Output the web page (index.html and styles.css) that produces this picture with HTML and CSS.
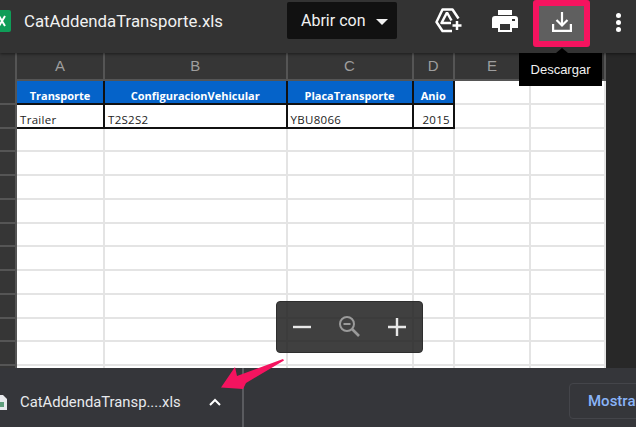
FILE: index.html
```html
<!DOCTYPE html>
<html lang="en">
<head>
    <meta charset="UTF-8">
    <title>CatAddendaTransporte.xls</title>
    <link rel="stylesheet" href="styles.css">
</head>
<body>
    <div class="viewer">
        <header class="toolbar">
            <svg class="file-badge" width="11" height="22" viewBox="0 0 11 22">
                <path d="M0 0h9a2 2 0 0 1 2 2v18a2 2 0 0 1-2 2H0z" fill="#0f9d58"/>
                <path d="M-1 6l6 10M5 6L-1 16" stroke="#fff" stroke-width="2" fill="none"/>
            </svg>
            <div class="file-name">CatAddendaTransporte.xls</div>
            <button class="open-with">Abrir con <span class="caret"></span></button>
            <div class="tools">
                <svg class="tool" width="28" height="26" viewBox="0 0 28 26" fill="none" stroke="#fff" stroke-width="2.500" stroke-linejoin="round">
                    <path d="M23.500 10.500L17.500 1.500H7.500L1.500 14l6 9H17"/>
                    <path d="M12 4.500L6.500 15H16M12 4.500l4.500 8"/>
                    <path d="M22 13v9M17.500 17.500h9"/>
                </svg>
                <svg class="tool" width="26" height="24" viewBox="0 0 26 24" fill="#fff">
                    <path d="M6 1h14v5H6zM3 7h20a3 3 0 0 1 3 3v9h-6v4H6v-4H0v-9a3 3 0 0 1 3-3z"/>
                    <path d="M8 15h10v6H8z" fill="#333"/>
                    <path d="M20 10h3v2h-3z" fill="#333"/>
                </svg>
                <div class="download-box">
                    <svg width="22" height="22" viewBox="0 0 22 22" fill="none" stroke="#fff" stroke-width="2.200">
                        <path d="M11 1v13M5.500 9l5.500 5.500L16.500 9"/>
                        <path d="M2.100 13v6.900h17.800V13"/>
                    </svg>
                </div>
                <div class="more"><span></span><span></span><span></span></div>
            </div>
        </header>

        <main class="sheet-area">
            <div class="row-gutter" id="gutter"></div>
            <div class="sheet">
                <div class="col-heads">
                    <div class="col-head col-a">A</div>
                    <div class="col-head col-b">B</div>
                    <div class="col-head col-c">C</div>
                    <div class="col-head col-d">D</div>
                    <div class="col-head col-e">E</div>
                    <div class="col-head col-f"></div>
                </div>
                <div class="row head-row">
                    <div class="cell col-a">Transporte</div>
                    <div class="cell col-b">ConfiguracionVehicular</div>
                    <div class="cell col-c">PlacaTransporte</div>
                    <div class="cell col-d">Anio</div>
                    <div class="cell col-e"></div>
                    <div class="cell col-f"></div>
                </div>
                <div class="row data-row">
                    <div class="cell col-a">Trailer</div>
                    <div class="cell col-b">T2S2S2</div>
                    <div class="cell col-c">YBU8066</div>
                    <div class="cell col-d num">2015</div>
                    <div class="cell col-e"></div>
                    <div class="cell col-f"></div>
                </div>
                <div id="emptyRows"></div>
            </div>
        </main>

        <footer class="download-bar">
            <svg class="bar-file" width="7" height="15" viewBox="0 0 7 15">
                <path d="M0 0h3l4 4v11H0z" fill="#e8eaed"/>
                <path d="M0 7h4v5H0z" fill="#5f9e7c"/>
            </svg>
            <div class="bar-name">CatAddendaTransp....xls</div>
            <svg class="bar-chevron" width="12" height="8" viewBox="0 0 12 8" fill="none" stroke="#fff" stroke-width="2"><path d="M1 7l5-5 5 5"/></svg>
            <div class="bar-divider"></div>
            <div class="show-all">Mostrar</div>
        </footer>

        <div class="tooltip">Descargar</div>

        <div class="zoom-box">
            <svg width="18" height="18" viewBox="0 0 18 18" stroke="#e8e8e8" stroke-width="2.400"><path d="M0 9h18"/></svg>
            <svg width="22" height="22" viewBox="2 2 22 22" fill="none" stroke="#9a9a9a" stroke-width="2">
                <circle cx="10" cy="10" r="7"/>
                <path d="M15 15l7 7" stroke-width="2.600"/>
                <path d="M6.500 10h7"/>
            </svg>
            <svg width="18" height="18" viewBox="0 0 18 18" stroke="#e8e8e8" stroke-width="2.400"><path d="M0 9h18M9 0v18"/></svg>
        </div>

        <svg class="arrow" width="68" height="34" viewBox="218 356 68 34">
            <path d="M283 359l1 1.500L246 383l-3 6-22-1.500L235 367l2 9z" fill="#f5135f"/>
        </svg>
    </div>

    <script>
        // row numbers on the left and the empty grid rows
        const gutter = document.getElementById('gutter');
        for (let i = 0; i < 14; i++) {
            const item = document.createElement('div');
            item.className = 'gutter-item';
            gutter.appendChild(item);
        }

        const emptyRows = document.getElementById('emptyRows');
        for (let i = 0; i < 11; i++) {
            const row = document.createElement('div');
            row.className = 'row';
            ['col-a', 'col-b', 'col-c', 'col-d', 'col-e', 'col-f'].forEach(col => {
                const cell = document.createElement('div');
                cell.className = `cell ${col}`;
                row.appendChild(cell);
            });
            emptyRows.appendChild(row);
        }
    </script>
</body>
</html>
```

FILE: styles.css
```css
* {
    margin: 0;
    padding: 0;
    box-sizing: border-box;
}

body {
    width: 636px;
    height: 427px;
    overflow: hidden;
    background: #282828;
    font-family: "Roboto", "Liberation Sans", sans-serif;
}

.viewer {
    position: relative;
    width: 636px;
    height: 427px;
    display: flex;
    flex-direction: column;
    overflow: hidden;
}

.toolbar {
    height: 53px;
    flex: none;
    padding-bottom: 12px;
    background: #333333;
    display: flex;
    align-items: center;
    box-shadow: 0 1px 3px rgba(0, 0, 0, 0.5);
    position: relative;
    z-index: 1;
}

.file-badge {
    flex: none;
}

.file-name {
    margin-left: 13px;
    width: 263px;
    color: #f1f1f1;
    font-size: 16.800px;
    white-space: nowrap;
}

.open-with {
    width: 110px;
    height: 37px;
    background: #111111;
    border: none;
    border-radius: 2px;
    color: #f1f1f1;
    font-family: inherit;
    font-size: 16px;
    display: flex;
    align-items: center;
    padding-left: 14px;
    gap: 11px;
}

.caret {
    width: 0;
    height: 0;
    border-left: 6px solid transparent;
    border-right: 6px solid transparent;
    border-top: 6px solid #f1f1f1;
    margin-top: 2px;
}

.tools {
    display: flex;
    align-items: center;
    margin-left: 38px;
}

.tool {
    flex: none;
}

.tool + .tool {
    margin-left: 29px;
}

.download-box {
    width: 57px;
    height: 47px;
    margin: 0 0 -6px 15px;
    padding-bottom: 4px;
    background: #5f5f5f;
    border: 6px solid #f5135f;
    border-radius: 3px;
    display: flex;
    align-items: center;
    justify-content: center;
}

.more {
    margin: 3px 0 0 26px;
    display: flex;
    flex-direction: column;
    gap: 2px;
}

.more span {
    width: 5px;
    height: 5px;
    border-radius: 50%;
    background: #fff;
}

.sheet-area {
    flex: 1;
    display: flex;
    overflow: hidden;
    min-height: 0;
}

.row-gutter {
    width: 17px;
    flex: none;
    background: #363636;
    border-right: 2px solid #555555;
    padding-top: 28px;
}

.gutter-item {
    height: 23.750px;
    border-bottom: 2px solid #555555;
}

.sheet {
    width: 589px;
    flex: none;
    background: #fff;
}

.col-heads {
    display: flex;
    height: 28px;
    background: #363636;
    border-bottom: 2px solid #555555;
}

.col-head {
    color: #9e9e9e;
    font-family: "Liberation Sans", sans-serif;
    font-size: 15px;
    line-height: 26px;
    text-align: center;
    border-right: 2px solid #555555;
}

.col-a { width: 88px; }
.col-b { width: 182.500px; }
.col-c { width: 126px; }
.col-d { width: 41.500px; }
.col-e { width: 76px; }
.col-f { width: 75px; }

.row {
    display: flex;
    height: 23.750px;
}

.cell {
    border-right: 2px solid #e4e4e4;
    border-bottom: 2px solid #e4e4e4;
    font-family: "Open Sans", "Liberation Sans", sans-serif;
    font-size: 11px;
    color: #222;
    padding: 0 3px;
    overflow: hidden;
    white-space: nowrap;
}

.head-row .cell {
    line-height: 29px;
}

.head-row .col-a,
.head-row .col-b,
.head-row .col-c,
.head-row .col-d {
    background: #0563c9;
    color: #fff;
    font-weight: 700;
    text-align: center;
    border-right-color: #111;
    border-bottom-color: #111;
}

.data-row .cell {
    font-size: 11.500px;
    line-height: 30px;
    letter-spacing: 0.3px;
}

.data-row .col-a,
.data-row .col-b,
.data-row .col-c,
.data-row .col-d {
    border-right-color: #111;
    border-bottom-color: #111;
}

.data-row .num {
    text-align: right;
}

.download-bar {
    height: 59px;
    flex: none;
    padding-top: 9px;
    background: #35363a;
    display: flex;
    align-items: center;
    position: relative;
    z-index: 1;
}

.bar-file {
    flex: none;
}

.bar-name {
    margin-left: 13px;
    width: 189px;
    flex: none;
    color: #e8eaed;
    font-size: 14.800px;
    white-space: nowrap;
}

.bar-chevron {
    flex: none;
}

.bar-divider {
    width: 2px;
    flex: none;
    align-self: stretch;
    margin: -9px 0 0 21px;
    background: #5a5b5f;
}

.show-all {
    margin-left: 325px;
    flex: none;
    width: 90px;
    height: 36px;
    margin-top: -2px;
    padding-left: 18px;
    border: 1px solid #44454a;
    border-radius: 4px;
    color: #8ab4f8;
    font-size: 15px;
    font-weight: 500;
    line-height: 34px;
    white-space: nowrap;
}

/* things floating over the sheet */
.tooltip {
    position: absolute;
    left: 519px;
    top: 53px;
    width: 83px;
    height: 33px;
    background: #000;
    color: #f1f1f1;
    font-family: "Liberation Sans", sans-serif;
    font-size: 13px;
    line-height: 34px;
    text-align: center;
    z-index: 2;
}

.tooltip::before {
    content: "";
    position: absolute;
    left: 37px;
    top: -5px;
    border-left: 6px solid transparent;
    border-right: 6px solid transparent;
    border-bottom: 5px solid #000;
}

.zoom-box {
    position: absolute;
    left: 276px;
    top: 301px;
    width: 147px;
    height: 52px;
    background: rgba(30, 30, 30, 0.85);
    border: 1px solid #2e2e2e;
    border-radius: 4px;
    display: flex;
    align-items: center;
    justify-content: space-between;
    padding: 0 16px;
    z-index: 2;
}

.arrow {
    position: absolute;
    left: 218px;
    top: 356px;
    z-index: 3;
}
```
